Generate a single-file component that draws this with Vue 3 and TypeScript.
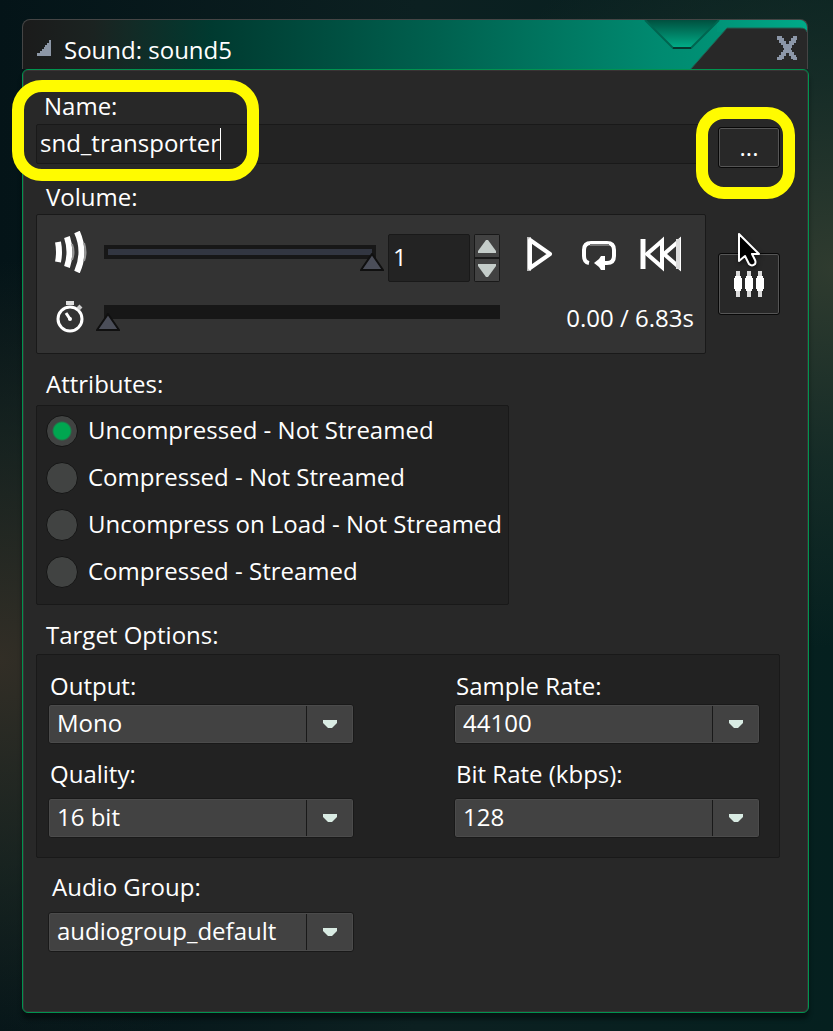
<script setup lang="ts">
import { ref } from 'vue'

const name = ref('snd_transporter')
const volume = ref(1)
const position = ref(0)
const attribute = ref(0)
const attributes: string[] = [
  'Uncompressed - Not Streamed',
  'Compressed - Not Streamed',
  'Uncompress on Load - Not Streamed',
  'Compressed - Streamed',
]

interface Option {
  id: string
  label: string
  value: string
  choices: string[]
}

const options = ref<Option[]>([
  { id: 'output', label: 'Output:', value: 'Mono', choices: ['Mono', 'Stereo', '3D'] },
  { id: 'rate', label: 'Sample Rate:', value: '44100', choices: ['22050', '44100', '48000'] },
  { id: 'quality', label: 'Quality:', value: '16 bit', choices: ['8 bit', '16 bit'] },
  { id: 'bitrate', label: 'Bit Rate (kbps):', value: '128', choices: ['64', '128', '192'] },
])

function step(amount: number): void {
  volume.value = Math.min(1, Math.max(0, Math.round((volume.value + amount) * 10) / 10))
}
</script>

<template>
  <main class="desktop">
    <section class="window">
      <header class="titlebar">
        <svg class="collapse" width="14" height="16" viewBox="0 0 14 16" shape-rendering="crispEdges">
          <path d="M12 0h2v16H0v-3h3v-2h2V9h2V7h1V5h2V3h2z" fill="#8c97a6" />
        </svg>
        <h1>Sound: sound5</h1>
        <svg class="flap" width="170" height="50" viewBox="0 0 170 50">
          <defs>
            <linearGradient id="flapShade" x1="0" y1="0" x2="0" y2="1">
              <stop offset="0" stop-color="#00503f" />
              <stop offset="1" stop-color="#00ae89" />
            </linearGradient>
            <linearGradient id="edgeShade" x1="0" y1="0" x2="1" y2="0">
              <stop offset="0" stop-color="#009478" />
              <stop offset="1" stop-color="#00aa88" />
            </linearGradient>
          </defs>
          <path d="M80 0H164Q170 2 170 10V12H80z" fill="url(#edgeShade)" />
          <path d="M8 0H82L54 28H36z" fill="url(#flapShade)" />
          <path d="M8 0L36 28H54L82 0" fill="none" stroke="#006550" stroke-width="2" />
          <path d="M36 28H54" stroke="#07382f" stroke-width="2" />
          <path d="M53 50L90 8H163Q169 8 170 12V50z" fill="#282828" />
          <path d="M53 50L90 8H163Q169 8 170 12" fill="none" stroke="#245e50" />
        </svg>
        <button class="close" aria-label="Close">
          <svg width="20" height="24" viewBox="0 0 20 24" shape-rendering="crispEdges">
            <path d="M0 0h4v2h2v3h2v3h4V5h2V2h2V0h4v3h-2v3h-2v2h-2v3h-1v3h1v2h2v3h2v2h2v3h-4v-2h-2v-3h-2v-3H8v3H6v3H4v2H0v-3h2v-2h2v-3h2v-2h1v-3H6V8H4V6H2V3H0z" fill="#8c97a8" stroke="#8c97a8" />
          </svg>
        </button>
      </header>

      <div class="body">
        <label class="caption name-caption" for="name">Name:</label>
        <div class="row">
          <input id="name" v-model="name" class="name" type="text" spellcheck="false" />
          <span class="caret" aria-hidden="true"></span>
          <span class="mark mark-name" aria-hidden="true"></span>
          <div class="browse-wrap">
            <button class="square browse">...</button>
            <span class="mark mark-browse" aria-hidden="true"></span>
          </div>
        </div>

        <label class="caption volume-caption" for="volume">Volume:</label>
        <div class="row player-row">
          <div class="panel player">
            <div class="line">
              <svg class="icon" width="36" height="42" viewBox="0 0 36 42">
                <g fill="none" stroke="#fff">
                  <path d="M5 11Q7 21 5 31" stroke-width="6" />
                  <path d="M14 6Q19 21 14 36" stroke-width="6" />
                  <path d="M24 1Q33 21 24 41" stroke-width="6" />
                </g>
                <path d="M19 13Q22 21 19 29M31 12Q34 21 31 30" fill="none" stroke="#999" stroke-width="2" />
              </svg>
              <input id="volume" v-model.number="volume" class="slider filled" type="range" min="0" max="1" step="0.1" />
              <input v-model.number="volume" class="amount" type="text" aria-label="Volume value" />
              <div class="stepper">
                <button aria-label="Increase" @click="step(0.1)">
                  <svg width="18" height="13" viewBox="0 0 18 13"><path d="M8 0H10L18 11V13H0V11z" fill="#c5cdca" /></svg>
                </button>
                <button aria-label="Decrease" @click="step(-0.1)">
                  <svg width="18" height="13" viewBox="0 0 18 13"><path d="M0 0H18V2L10 13H8L0 2z" fill="#c5cdca" /></svg>
                </button>
              </div>
              <div class="transport">
                <button aria-label="Play">
                  <svg width="32" height="36" viewBox="0 0 32 36">
                    <path d="M3 1V35" stroke="#bbb" stroke-width="4" />
                    <path d="M4 4L24 18L4 32z" fill="none" stroke="#fff" stroke-width="4" stroke-linejoin="round" />
                  </svg>
                </button>
                <button aria-label="Loop">
                  <svg width="36" height="36" viewBox="0 0 36 36">
                    <path d="M8 27Q3 26 3 20V14Q3 7 10 7H26Q33 7 33 14V20Q33 27 26 27H22" fill="none" stroke="#fff" stroke-width="4" />
                    <path d="M9 9H28" stroke="#777" stroke-width="2" />
                    <path d="M13 27L18 23L20 20H24V34H20L18 31z" fill="#fff" />
                  </svg>
                </button>
                <button aria-label="Rewind">
                  <svg width="42" height="36" viewBox="0 0 42 36">
                    <g fill="none" stroke="#fff" stroke-width="4">
                      <path d="M3 3V33" stroke-width="5" />
                      <path d="M22 5L7 18L22 31z" />
                      <path d="M39 5L24 18L39 31z" />
                      <path d="M38 3V33" stroke="#ddd" />
                    </g>
                  </svg>
                </button>
              </div>
            </div>
            <div class="line position-line">
              <svg class="icon" width="36" height="36" viewBox="0 0 36 36">
                <g fill="none" stroke="#fff">
                  <circle cx="17" cy="21" r="12" stroke-width="3" />
                  <path d="M13 5H21" stroke="#ddd" stroke-width="4" />
                  <path d="M25 8L28 11" stroke="#ccc" stroke-width="4" />
                  <path d="M13 15L17 21" stroke-width="3" />
                </g>
                <circle cx="17" cy="21" r="2" fill="#fff" />
              </svg>
              <input v-model.number="position" class="slider" type="range" min="0" max="6.83" step="0.01" aria-label="Position" />
              <output class="time">{{ position.toFixed(2) }} / 6.83s</output>
            </div>
          </div>
          <button class="square mixer" aria-label="Mixer">
            <svg width="32" height="26" viewBox="0 0 32 26">
              <path d="M5 0V26M16 0V26M27 0V26" stroke="#ddd" stroke-width="4" />
              <path d="M2 5H8V7H9V18H8V20H2V18H1V7H2zM13 5H19V7H20V18H19V20H13V18H12V7H13zM24 5H30V7H31V18H30V20H24V18H23V7H24z" fill="#fff" />
            </svg>
            <svg class="pointer" width="28" height="38" viewBox="0 0 28 38">
              <path d="M3 3V30L9 25L13 33Q16 36 19 33Q20 31 19 29L16 23H23z" fill="#000" stroke="#fff" stroke-width="2" stroke-linejoin="round" />
            </svg>
          </button>
        </div>

        <div id="attributes" class="caption section-caption">Attributes:</div>
        <div class="panel attributes" role="radiogroup" aria-labelledby="attributes">
          <label v-for="(text, i) in attributes" :key="text" class="choice">
            <input v-model="attribute" type="radio" name="attribute" :value="i" />
            <span>{{ text }}</span>
          </label>
        </div>

        <div class="caption section-caption target-caption">Target Options:</div>
        <div class="panel targets">
          <div v-for="option in options" :key="option.id" class="field">
            <label class="caption" :for="option.id">{{ option.label }}</label>
            <select :id="option.id" v-model="option.value">
              <option v-for="choice in option.choices" :key="choice">{{ choice }}</option>
            </select>
          </div>
        </div>

        <div class="group">
          <label class="caption" for="group">Audio Group:</label>
          <select id="group"><option>audiogroup_default</option></select>
        </div>
      </div>
    </section>
  </main>
</template>

<style>
body {
  margin: 0;
  background: #06171b;
}
</style>

<style scoped>
* {
  box-sizing: border-box;
}

.desktop {
  min-height: 100vh;
  padding: 19px 24px 18px 22px;
  font: 24px/32px "Open Sans", "Noto Sans", sans-serif;
  color: #fff;
  background:
    radial-gradient(ellipse 420px 400px at 0 64%, #322e26, #28302780 55%, transparent),
    radial-gradient(ellipse 400px 380px at 100% 26%, #2f3b2f, #22352d90 50%, transparent),
    linear-gradient(90deg, #041418, #0c2021 50%, #05201f);
}

button,
input,
select {
  margin: 0;
  padding: 0;
  border: 0;
  border-radius: 0;
  background: none;
  color: inherit;
  font: inherit;
  outline: 0;
}

svg {
  display: block;
  flex: none;
}

.titlebar {
  display: flex;
  align-items: center;
  position: relative;
  height: 50px;
  margin-right: 1px;
  padding: 10px 10px 0 14px;
  border: 1px solid #454545;
  border-bottom: 0;
  border-radius: 8px 8px 0 0;
  background: linear-gradient(90deg, #1b1b1b, #1b2321 9%, #003a30 24%, #00614f 53%, #008a70 81%, #009d7d);
  overflow: hidden;
}

.collapse {
  margin-top: -4px;
}

h1 {
  flex: 1;
  margin: 0 0 0 13px;
  font: inherit;
}

.flap {
  position: absolute;
  top: 0;
  right: 0;
}

.close {
  position: relative;
  margin-top: -4px;
}

.body {
  padding: 20px 28px 60px 13px;
  border: 1px solid #00934f;
  border-radius: 6px;
  background: #282828;
  box-shadow: inset 0 0 0 1px #3a3335, 0 6px 4px #0006;
}

.caption {
  display: block;
  height: 32px;
  padding-left: 10px;
}

.name-caption {
  margin-bottom: 2px;
  padding-left: 8px;
}

.volume-caption {
  width: fit-content;
  margin: 17px 0 1px;
}

.section-caption {
  margin: 14px 0 5px;
}

.target-caption {
  margin-bottom: 3px;
}

.row {
  display: grid;
  grid-template-columns: 1fr 62px;
  gap: 12px;
  position: relative;
}

.player-row {
  align-items: center;
}

.name {
  height: 40px;
  padding: 0 3px 4px;
  border: 1px solid #191919;
  border-radius: 2px;
  background: #232323;
}

.caret {
  position: absolute;
  top: 4px;
  left: 184px;
  width: 1px;
  height: 32px;
  background: #fff;
}

.mark {
  position: absolute;
  border: 12px solid #fffb00;
  pointer-events: none;
}

.mark-name {
  top: -44px;
  left: -24px;
  width: 247px;
  height: 101px;
  border-radius: 30px;
}

.browse-wrap {
  position: relative;
  height: 40px;
  padding-top: 3px;
}

.mark-browse {
  top: -17px;
  left: -22px;
  width: 99px;
  height: 92px;
  border-radius: 28px;
}

.square {
  display: flex;
  align-items: center;
  justify-content: center;
  position: relative;
  width: 100%;
  border: 1px solid #080808;
  border-radius: 3px;
  box-shadow: inset 0 0 0 1px #565656;
}

.browse {
  height: 41px;
  padding-bottom: 2px;
}

.mixer {
  height: 62px;
}

.pointer {
  position: absolute;
  top: -23px;
  left: 17px;
  filter: drop-shadow(1px 2px 2px #0008);
}

.panel {
  border: 1px solid #191919;
  border-radius: 2px;
  background: #222;
}

.player {
  min-width: 0;
  height: 140px;
  padding: 12px 11px 0 16px;
  background: #333;
}

.line {
  display: flex;
  align-items: center;
  height: 62px;
}

.position-line {
  margin-top: -4px;
}

.icon {
  margin-right: 7px;
}

.player .line:first-child .icon {
  margin-top: -12px;
}

.slider {
  appearance: none;
  flex: 1;
  min-width: 0;
  height: 30px;
  background: linear-gradient(#171717, #171717) 50% 4px / calc(100% - 16px) 14px no-repeat;
}

.filled {
  margin-top: -4px;
  background:
    linear-gradient(#323641, #323641) 50% 8px / calc(100% - 24px) 6px no-repeat,
    linear-gradient(#171717, #171717) 50% 4px / calc(100% - 16px) 14px no-repeat;
}

.slider::-webkit-slider-thumb {
  appearance: none;
  width: 24px;
  height: 18px;
  margin-top: 12px;
  background: url("data:image/svg+xml,%3Csvg xmlns='http://www.w3.org/2000/svg' width='24' height='18'%3E%3Cpath d='M12 1L23 17H1z' fill='%234b4e59' stroke='%23101010' stroke-width='2'/%3E%3C/svg%3E");
}

.amount {
  width: 82px;
  height: 48px;
  margin-left: 4px;
  padding: 0 4px 4px;
  border: 1px solid #191919;
  border-radius: 2px;
  background: #232323;
}

.stepper {
  display: grid;
  gap: 2px;
  margin: 0 20px 0 4px;
  padding: 1px;
  border-radius: 2px;
  background: #191919;
}

.stepper button {
  display: grid;
  place-items: center;
  width: 24px;
  height: 22px;
  background: #424242;
}

.transport {
  display: flex;
  justify-content: space-between;
  width: 156px;
  margin: -8px 12px 0 6px;
}

.time {
  width: 182px;
  padding-top: 4px;
  text-align: right;
}

.position-line .slider {
  margin: -1px 4px 0 0;
}

.position-line .time {
  margin-left: -4px;
  padding-top: 4px;
  width: 186px;
}

.attributes {
  width: fit-content;
  padding: 1px 6px 9px 9px;
}

.choice {
  display: flex;
  align-items: center;
  gap: 10px;
  height: 47px;
}

.choice input {
  appearance: none;
  width: 32px;
  height: 32px;
  border: 1px solid #151515;
  border-radius: 50%;
  background: #414342;
}

.choice input:checked {
  background: radial-gradient(circle, #00a650 8px, #414342 10px);
}

.choice span {
  margin-top: -2px;
}

.targets {
  display: grid;
  grid-template-columns: 1fr 1fr;
  gap: 14px 100px;
  padding: 15px 19px 19px 11px;
}

.field {
  display: grid;
  gap: 2px;
}

.field .caption {
  padding-left: 2px;
}

.field:nth-child(n + 3) {
  gap: 8px;
}

select {
  appearance: none;
  width: 100%;
  height: 40px;
  padding: 0 56px 2px 8px;
  border: 1px solid #191919;
  border-radius: 3px;
  background:
    url("data:image/svg+xml,%3Csvg xmlns='http://www.w3.org/2000/svg' width='14' height='8'%3E%3Cpath d='M0 0h14v3l-5 5H5L0 3z' fill='%23d9ebe3'/%3E%3C/svg%3E") right 16px top 15px no-repeat,
    linear-gradient(#191919, #191919) right 46px top 0 / 1px 100% no-repeat,
    #424242;
  box-shadow: inset 0 0 0 1px #4b4b4b;
}

.group {
  display: grid;
  gap: 9px;
  width: 306px;
  max-width: 100%;
  margin: 13px 0 0 12px;
}

.group .caption {
  padding-left: 4px;
}
</style>
